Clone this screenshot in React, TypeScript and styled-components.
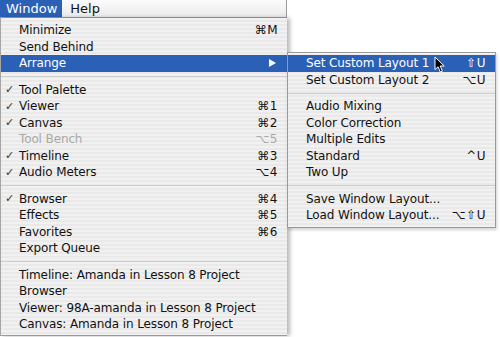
import styled, { createGlobalStyle, css } from 'styled-components'

type MenuEntry =
  | 'sep'
  | {
      label: string
      shortcut?: string
      checked?: boolean
      disabled?: boolean
      active?: boolean
      arrow?: boolean
    }

const windowItems: MenuEntry[] = [
  { label: 'Minimize', shortcut: '⌘M' },
  { label: 'Send Behind' },
  { label: 'Arrange', active: true, arrow: true },
  'sep',
  { label: 'Tool Palette', checked: true },
  { label: 'Viewer', checked: true, shortcut: '⌘1' },
  { label: 'Canvas', checked: true, shortcut: '⌘2' },
  { label: 'Tool Bench', disabled: true, shortcut: '⌥5' },
  { label: 'Timeline', checked: true, shortcut: '⌘3' },
  { label: 'Audio Meters', checked: true, shortcut: '⌥4' },
  'sep',
  { label: 'Browser', checked: true, shortcut: '⌘4' },
  { label: 'Effects', shortcut: '⌘5' },
  { label: 'Favorites', shortcut: '⌘6' },
  { label: 'Export Queue' },
  'sep',
  { label: 'Timeline: Amanda in Lesson 8 Project' },
  { label: 'Browser' },
  { label: 'Viewer: 98A-amanda in Lesson 8 Project' },
  { label: 'Canvas: Amanda in Lesson 8 Project' },
]

const arrangeItems: MenuEntry[] = [
  { label: 'Set Custom Layout 1', shortcut: '⇧U', active: true },
  { label: 'Set Custom Layout 2', shortcut: '⌥U' },
  'sep',
  { label: 'Audio Mixing' },
  { label: 'Color Correction' },
  { label: 'Multiple Edits' },
  { label: 'Standard', shortcut: '^U' },
  { label: 'Two Up' },
  'sep',
  { label: 'Save Window Layout...' },
  { label: 'Load Window Layout...', shortcut: '⌥⇧U' },
]

const BLUE = '#2a60b6'

const GlobalStyle = createGlobalStyle`
  body {
    margin: 0;
    background: #ffffff;
    font-family: 'DejaVu Sans', 'Liberation Sans', sans-serif;
  }
`

const Screen = styled.div`
  position: relative;
  width: 500px;
  height: 337px;
  overflow: hidden;
  background: #ffffff;
`

const Column = styled.div`
  width: 287px;
  display: flex;
  flex-direction: column;
`

const MenuBar = styled.div`
  height: 17px;
  display: flex;
  align-items: stretch;
  background: linear-gradient(#fbfbfb, #ebebeb);
  border-bottom: 1px solid #9c9c9c;
  border-right: 1px solid #9a9a9a;
  border-top: 1px solid #c8c8c8;
  box-sizing: content-box;
  margin-top: -1px;
`

const BarTitle = styled.div<{ $active?: boolean }>`
  display: flex;
  align-items: center;
  padding: 0 6px 0 6px;
  margin-right: 3px;
  font-size: 13px;
  color: #111;
  ${({ $active }) =>
    $active &&
    css`
      background: ${BLUE};
      color: #fff;
      padding: 0 5px 0 6px;
      margin-right: 2px;
    `}
`

const Stripes = css`
  background: repeating-linear-gradient(
    to bottom,
    #f1f1f1 0px,
    #f1f1f1 2px,
    #e9e9e9 2px,
    #e9e9e9 4px
  );
`

const MenuPanel = styled.div`
  ${Stripes};
  height: 318px;
  box-sizing: border-box;
  padding-top: 4px;
  border-left: 1px solid #a6a6a6;
  border-bottom: 1px solid #9c9c9c;
  box-shadow: 3px 0 4px rgba(0, 0, 0, 0.28);
  display: flex;
  flex-direction: column;
`

const SubMenu = styled.div`
  ${Stripes};
  position: absolute;
  left: 287px;
  top: 52px;
  width: 209px;
  box-sizing: border-box;
  padding: 2px 0 3px;
  border: 1px solid #9a9a9a;
  box-shadow: 1px 2px 3px rgba(0, 0, 0, 0.18);
  display: flex;
  flex-direction: column;
`

const Row = styled.div<{ $active?: boolean; $disabled?: boolean; $sub?: boolean }>`
  position: relative;
  display: flex;
  align-items: center;
  height: 16.5px;
  padding: ${({ $sub }) => ($sub ? '0 9px 0 18px' : '0 9px 0 4px')};
  font-size: 12px;
  letter-spacing: -0.12px;
  white-space: nowrap;
  color: ${({ $disabled }) => ($disabled ? '#a9a9a9' : '#111111')};
  ${({ $active }) =>
    $active &&
    css`
      background: ${BLUE};
      color: #ffffff;
    `}
`

const Check = styled.span`
  width: 14px;
  flex: none;
  font-size: 11px;
  font-weight: bold;
  color: #333;
`

const Label = styled.span`
  flex: 1;
`

const Shortcut = styled.span`
  font-size: 12px;
  letter-spacing: 0.5px;
`

const Arrow = styled.span`
  width: 0;
  height: 0;
  margin-right: 2px;
  border-top: 4px solid transparent;
  border-bottom: 4px solid transparent;
  border-left: 7px solid #ffffff;
`

const Separator = styled.div`
  height: 10px;
  display: flex;
  align-items: center;
  &::after {
    content: '';
    flex: 1;
    height: 1px;
    background: #cdcdcd;
  }
`

const Cursor = styled.svg`
  position: absolute;
  left: 146px;
  top: 1px;
  width: 12px;
  height: 17px;
`

function MenuRows({ items, sub }: { items: MenuEntry[]; sub?: boolean }) {
  return (
    <>
      {items.map((e, i) =>
        e === 'sep' ? (
          <Separator key={i} />
        ) : (
          <Row key={i} $active={e.active} $disabled={e.disabled} $sub={sub}>
            {!sub && <Check>{e.checked ? '✓' : ''}</Check>}
            <Label>{e.label}</Label>
            {e.shortcut && <Shortcut>{e.shortcut}</Shortcut>}
            {e.arrow && <Arrow />}
            {sub && e.active && (
              <Cursor viewBox="0 0 12 17">
                <path
                  d="M1 1 L1 13.5 L4 10.8 L6.3 16 L8.4 15.1 L6.2 10 L10.2 10 Z"
                  fill="#000"
                  stroke="#fff"
                  strokeWidth="1"
                  strokeLinejoin="round"
                />
              </Cursor>
            )}
          </Row>
        )
      )}
    </>
  )
}

export default function App() {
  return (
    <Screen>
      <GlobalStyle />
      <Column>
        <MenuBar>
          <BarTitle $active>Window</BarTitle>
          <BarTitle>Help</BarTitle>
        </MenuBar>
        <MenuPanel>
          <MenuRows items={windowItems} />
        </MenuPanel>
      </Column>
      <SubMenu>
        <MenuRows items={arrangeItems} sub />
      </SubMenu>
    </Screen>
  )
}
